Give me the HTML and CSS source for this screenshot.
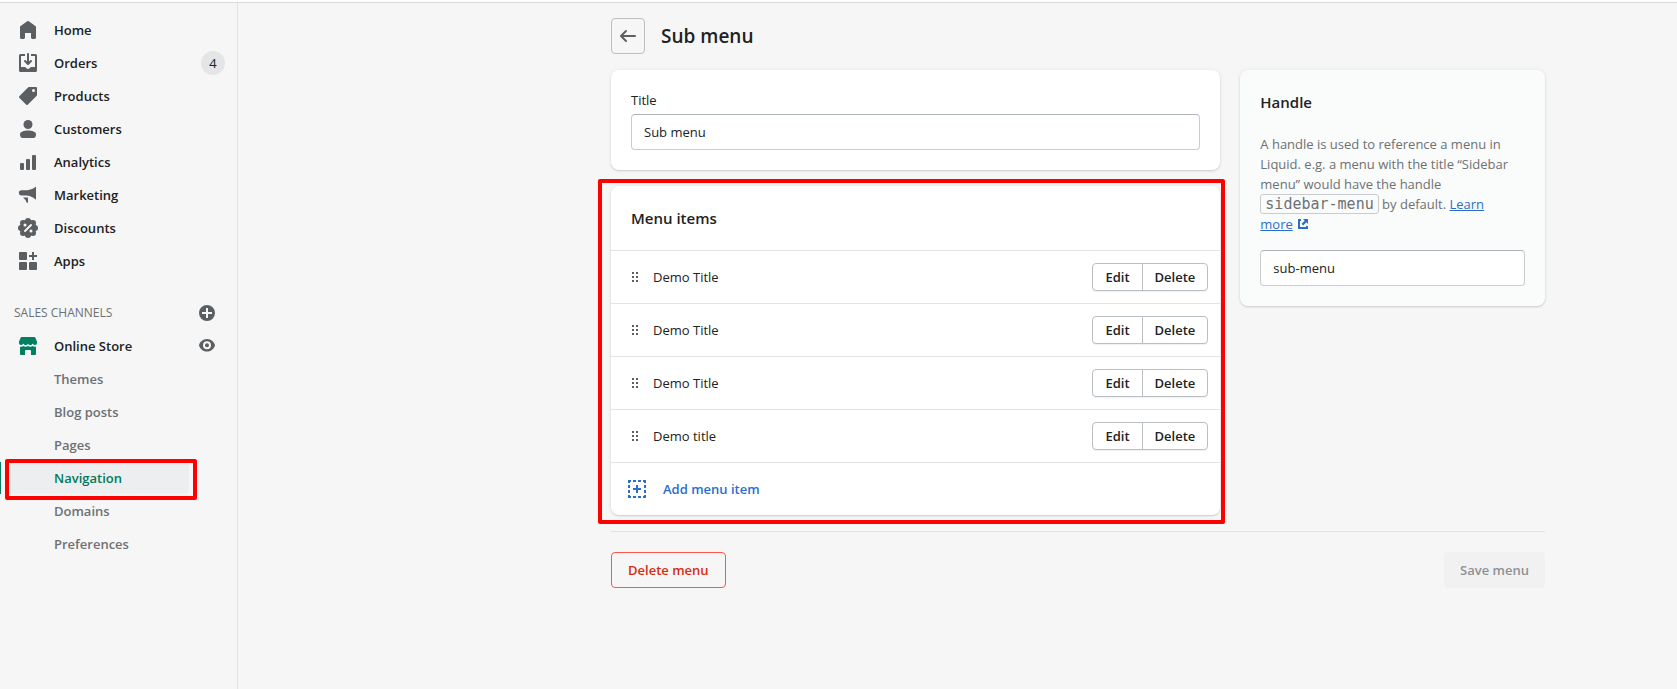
FILE: index.html
```html
<!DOCTYPE html>
<html lang="en">

<head>
    <meta charset="UTF-8">
    <meta name="viewport" content="width=device-width, initial-scale=1.0">
    <title>Sub menu</title>
    <link rel="stylesheet" href="styles.css">
</head>

<body>
    <!-- Shared shapes -->
    <svg class="sprite" aria-hidden="true">
        <symbol id="drag" viewBox="0 0 8 12">
            <path d="M1 1h2v2H1zM5 1h2v2H5zM1 5h2v2H1zM5 5h2v2H5zM1 9h2v2H1zM5 9h2v2H5z" />
        </symbol>
    </svg>

    <div class="topbar"></div>
    <div class="layout">
        <!-- Sidebar -->
        <nav class="sidebar">
            <ul class="nav">
                <li><a href="#">
                    <svg class="icon" viewBox="0 0 20 20"><path d="M18 7.261V17.500c0 .841-.672 1.500-1.500 1.500h-2c-.828 0-1.500-.659-1.500-1.500V13H7v4.477C7 18.318 6.328 19 5.500 19h-2c-.828 0-1.500-.682-1.500-1.523V7.261a1.500 1.500 0 0 1 .615-1.210l6.590-4.820a1.481 1.481 0 0 1 1.590 0l6.590 4.820A1.500 1.500 0 0 1 18 7.260z" /></svg>
                    <span>Home</span></a></li>
                <li><a href="#">
                    <svg class="icon" viewBox="0 0 20 20"><path d="M11 1a1 1 0 1 0-2 0v7.586L7.707 7.293a1 1 0 0 0-1.414 1.414l3 3a1 1 0 0 0 1.414 0l3-3a1 1 0 0 0-1.414-1.414L11 8.586V1z" /><path d="M3 14V3h4V1H2.500A1.500 1.500 0 0 0 1 2.500v15A1.500 1.500 0 0 0 2.500 19h15a1.500 1.500 0 0 0 1.500-1.500v-15A1.500 1.500 0 0 0 17.500 1H13v2h4v11h-3.500c-.775 0-1.388.662-1.926 1.244l-.110.120A1.994 1.994 0 0 1 10 16a1.994 1.994 0 0 1-1.463-.637l-.111-.120C7.888 14.664 7.275 14 6.500 14H3z" /></svg>
                    <span>Orders</span><span class="count">4</span></a></li>
                <li><a href="#">
                    <svg class="icon" viewBox="0 0 20 20"><path fill-rule="evenodd" d="M10.293 1.293A1 1 0 0 1 11 1h7a1 1 0 0 1 1 1v7a1 1 0 0 1-.293.707l-9 9a1 1 0 0 1-1.414 0l-7-7a1 1 0 0 1 0-1.414l9-9zM15.500 6a1.500 1.500 0 1 0 0-3 1.500 1.500 0 0 0 0 3z" /></svg>
                    <span>Products</span></a></li>
                <li><a href="#">
                    <svg class="icon" viewBox="0 0 20 20"><circle cx="10" cy="5.500" r="4.500" /><path d="M2 15.500C2 12.500 6 11.500 10 11.500s8 1 8 4C18 17.500 17 19 15.500 19h-11C3 19 2 17.500 2 15.500z" /></svg>
                    <span>Customers</span></a></li>
                <li><a href="#">
                    <svg class="icon" viewBox="0 0 20 20"><rect x="2" y="11" width="4" height="7" rx="1" /><rect x="8" y="7" width="4" height="11" rx="1" /><rect x="14" y="3" width="4" height="15" rx="1" /></svg>
                    <span>Analytics</span></a></li>
                <li><a href="#">
                    <svg class="icon" viewBox="0 0 20 20"><path d="M18 1.500v13.300c-2.500-2.200-5.500-3.800-9-4.300H3.500A2.500 2.500 0 0 1 3.500 5.200H9c3.500-.300 6.500-1.700 9-3.700zM5 12.500h5v5.300H8.800L7.500 15z" /></svg>
                    <span>Marketing</span></a></li>
                <li><a href="#">
                    <svg class="icon" viewBox="0 0 20 20"><g><circle cx="10" cy="10" r="8.200" /><circle cx="10" cy="3" r="3" /><circle cx="15" cy="5" r="3" /><circle cx="17" cy="10" r="3" /><circle cx="15" cy="15" r="3" /><circle cx="10" cy="17" r="3" /><circle cx="5" cy="15" r="3" /><circle cx="3" cy="10" r="3" /><circle cx="5" cy="5" r="3" /></g><path class="cut-line" d="M7 13l6-6" /><circle class="cut" cx="7" cy="7" r="1.500" /><circle class="cut" cx="13" cy="13" r="1.500" /></svg>
                    <span>Discounts</span></a></li>
                <li><a href="#">
                    <svg class="icon" viewBox="0 0 20 20"><rect x="1" y="1" width="8" height="8" rx="1" /><rect x="1" y="11" width="8" height="8" rx="1" /><rect x="11" y="11" width="8" height="8" rx="1" /><path d="M14 1h2v3h3v2h-3v3h-2V6h-3V4h3z" /></svg>
                    <span>Apps</span></a></li>
            </ul>

            <div class="section">
                <span>SALES CHANNELS</span>
                <button type="button" class="icon-btn" aria-label="Add sales channel">
                    <svg class="icon" viewBox="0 0 20 20"><path fill-rule="evenodd" d="M10 2a8 8 0 1 0 0 16 8 8 0 0 0 0-16zM9 5h2v4h4v2h-4v4H9v-4H5V9h4z" /></svg>
                </button>
            </div>

            <ul class="nav">
                <li class="channel"><a href="#">
                    <svg class="icon store" viewBox="0 0 20 20"><path d="M3 1h14l2 4.500V7c0 1.300-.900 2-2 2s-2-.600-2.300-1.500C14.200 8.500 13.300 9 12.300 9s-1.900-.500-2.300-1.500C9.600 8.500 8.700 9 7.700 9s-1.900-.500-2.400-1.500C5 8.400 4.100 9 3 9S1 8.300 1 7V5.500z" /><path d="M2 10.700c1.300.300 2.500 0 3.400-.700 1.300 1 3.300 1 4.600 0 1.300 1 3.300 1 4.600 0 .900.700 2.100 1 3.400.700V18a1 1 0 0 1-1 1h-4v-4a1 1 0 0 0-1-1H8a1 1 0 0 0-1 1v4H3a1 1 0 0 1-1-1z" /></svg>
                    <span>Online Store</span></a>
                    <button type="button" class="icon-btn" aria-label="View your online store">
                        <svg class="icon" viewBox="0 0 20 20"><path fill-rule="evenodd" d="M10 3c-4.500 0-7 3.200-7.900 5.700v1c.9 2.600 3.400 5.800 7.900 5.800s7-3.200 7.900-5.800v-1C17 6.200 14.500 3 10 3zM10 5.200a4 4 0 1 1 0 8 4 4 0 0 1 0-8z" /><circle cx="10" cy="9.200" r="2" /></svg>
                    </button></li>
            </ul>
            <ul class="nav subnav">
                <li><a href="#">Themes</a></li>
                <li><a href="#">Blog posts</a></li>
                <li><a href="#">Pages</a></li>
                <li class="active"><a href="#" aria-current="page">Navigation</a><span class="mark"></span></li>
                <li><a href="#">Domains</a></li>
                <li><a href="#">Preferences</a></li>
            </ul>
        </nav>

        <!-- Page -->
        <main class="page">
            <header class="page-header">
                <button type="button" class="back" aria-label="Back">
                    <svg class="icon" viewBox="0 0 20 20"><path d="M17 9H5.414l3.293-3.293a1 1 0 0 0-1.414-1.414l-5 5a1 1 0 0 0 0 1.414l5 5a1 1 0 0 0 1.414-1.414L5.414 11H17a1 1 0 1 0 0-2z" /></svg>
                </button>
                <h1>Sub menu</h1>
            </header>

            <div class="columns">
                <div class="primary">
                    <section class="card padded">
                        <label for="title">Title</label>
                        <input id="title" type="text" value="Sub menu">
                    </section>

                    <section class="card">
                        <h2 class="card-header">Menu items</h2>
                        <ul class="items">
                            <li>
                                <svg class="drag"><use href="#drag" /></svg>
                                <span class="name">Demo Title</span>
                                <span class="group"><button type="button">Edit</button><button type="button">Delete</button></span>
                            </li>
                            <li>
                                <svg class="drag"><use href="#drag" /></svg>
                                <span class="name">Demo Title</span>
                                <span class="group"><button type="button">Edit</button><button type="button">Delete</button></span>
                            </li>
                            <li>
                                <svg class="drag"><use href="#drag" /></svg>
                                <span class="name">Demo Title</span>
                                <span class="group"><button type="button">Edit</button><button type="button">Delete</button></span>
                            </li>
                            <li>
                                <svg class="drag"><use href="#drag" /></svg>
                                <span class="name">Demo title</span>
                                <span class="group"><button type="button">Edit</button><button type="button">Delete</button></span>
                            </li>
                        </ul>
                        <button type="button" class="add">
                            <svg class="icon" viewBox="0 0 20 20"><path d="M1 1h3v2H3v1H1zM6 1h3v2H6zM11 1h3v2h-3zM16 1h3v3h-2V3h-1zM17 6h2v3h-2zM17 11h2v3h-2zM17 16h2v3h-3v-2h1zM11 17h3v2h-3zM6 17h3v2H6zM1 16h2v1h1v2H1zM1 11h2v3H1zM1 6h2v3H1zM9 6h2v3h3v2h-3v3H9v-3H6V9h3z" /></svg>
                            <span>Add menu item</span>
                        </button>
                        <span class="mark"></span>
                    </section>
                </div>

                <aside class="card padded handle">
                    <h2><label for="handle">Handle</label></h2>
                    <p>A handle is used to reference a menu in Liquid. e.g. a menu with the title “Sidebar menu” would have the handle <code>sidebar-menu</code> by default. <a href="#">Learn <span class="keep">more<svg class="external" viewBox="0 0 12 12"><path d="M4 1v2H3v6h6V8h2v3H1V1zM6 1h5v5L9.300 4.300 6.200 7.400 4.600 5.800 7.700 2.700z" /></svg></span></a></p>
                    <input id="handle" type="text" value="sub-menu">
                </aside>
            </div>

            <footer class="actions">
                <button type="button" class="btn-delete">Delete menu</button>
                <button type="button" class="btn-save" disabled>Save menu</button>
            </footer>
        </main>
    </div>
</body>

</html>
```
FILE: styles.css
```css
* {
    box-sizing: border-box;
}

body {
    margin: 0;
    min-height: 100vh;
    display: flex;
    flex-direction: column;
    background-color: #f6f6f6;
    color: #202223;
    font-family: "Open Sans", "Noto Sans", sans-serif;
    font-size: 13px;
    line-height: 20px;
}

h1,
h2,
p,
ul {
    margin: 0;
    padding: 0;
}

ul {
    list-style: none;
}

a {
    color: #2c6ecb;
}

button,
input {
    font: inherit;
    color: inherit;
}

button {
    font-weight: 600;
    padding: 0;
    cursor: pointer;
}

.sprite {
    display: none;
}

.icon {
    display: block;
    flex: none;
    width: 20px;
    height: 20px;
    fill: #5c5f62;
}

.cut {
    fill: #f6f6f6;
}

.cut-line {
    stroke: #f6f6f6;
    stroke-width: 2;
    stroke-linecap: round;
}

.topbar {
    height: 3px;
    background-color: white;
    border-bottom: 1px solid #d8d8d8;
}

.layout {
    display: flex;
    flex: 1;
}

/* Sidebar */
.sidebar {
    flex: none;
    width: 238px;
    padding-top: 11px;
    border-right: 1px solid #e1e3e5;
}

.nav {
    display: grid;
    gap: 1px;
}

.nav li {
    display: flex;
    position: relative;
}

.nav a {
    flex: 1;
    display: flex;
    align-items: center;
    gap: 16px;
    height: 32px;
    margin-left: 8px;
    padding: 0 4px 0 10px;
    color: #202223;
    font-weight: 600;
    text-decoration: none;
}

.count {
    width: 24px;
    margin: 0 8px 0 auto;
    border-radius: 12px;
    background-color: #e4e5e7;
    font-weight: 400;
    line-height: 24px;
    text-align: center;
}

.section {
    display: flex;
    align-items: center;
    justify-content: space-between;
    height: 32px;
    margin: 20px 0 1px;
    padding-left: 14px;
    color: #6d7175;
    font-size: 12px;
}

.icon-btn {
    margin-right: 20px;
    border: 0;
    background: none;
}

.store {
    fill: #008060;
}

.subnav {
    margin-top: 1px;
}

.subnav a {
    padding-left: 46px;
    margin-right: 48px;
    border-radius: 4px;
    color: #6d7175;
}

.subnav .active a {
    background-color: #edeeef;
    color: #007a5c;
}

.active::before {
    content: "";
    position: absolute;
    inset: 0 auto 0 0;
    width: 1px;
    background-color: #008060;
}

/* Red highlight frames */
.mark {
    position: absolute;
    border: 4px solid red;
    border-radius: 2px;
    pointer-events: none;
}

.active .mark {
    inset: -3px 40px -6px 5px;
}

.card .mark {
    inset: -7px -5px -9px -13px;
}

/* Page */
.page {
    flex: 1;
    max-width: 934px;
    margin: 0 132px 0 auto;
    padding-top: 15px;
}

.page-header {
    display: flex;
    align-items: center;
    gap: 16px;
    margin-bottom: 16px;
}

.back {
    display: grid;
    place-items: center;
    width: 34px;
    height: 36px;
    border: 1px solid #babfc3;
    border-radius: 4px;
    background: none;
}

h1 {
    font-size: 19px;
    font-weight: 600;
    line-height: 28px;
}

h2 {
    font-size: 15px;
    font-weight: 600;
    line-height: 24px;
}

.columns {
    display: grid;
    grid-template-columns: 2fr 1fr;
    gap: 20px;
    align-items: start;
}

.primary {
    display: grid;
    gap: 16px;
}

.card {
    position: relative;
    border-radius: 8px;
    background-color: white;
    box-shadow: 0 0 5px rgba(23, 24, 24, 0.05), 0 1px 2px rgba(0, 0, 0, 0.15);
}

.padded {
    display: grid;
    padding: 20px;
}

.padded input {
    width: 100%;
    height: 36px;
    margin-top: 4px;
    padding: 0 12px;
    border: 1px solid #c9cccf;
    border-top-color: #aeb4b9;
    border-radius: 4px;
    background-color: white;
}

.card-header {
    padding: 20px;
}

.items li {
    display: flex;
    align-items: center;
    height: 53px;
    padding: 0 12px 0 20px;
    border-top: 1px solid #e1e3e5;
}

.drag {
    width: 8px;
    height: 12px;
    fill: #5c5f62;
}

.name {
    flex: 1;
    margin-left: 14px;
}

.group {
    display: flex;
}

.group button {
    height: 28px;
    padding: 0 12px;
    border: 1px solid #babfc3;
    border-radius: 4px 0 0 4px;
    background-color: white;
    box-shadow: 0 1px 0 rgba(0, 0, 0, 0.05);
}

.group button + button {
    margin-left: -1px;
    border-radius: 0 4px 4px 0;
}

.add {
    display: flex;
    align-items: center;
    gap: 16px;
    width: 100%;
    height: 53px;
    padding: 0 16px;
    border: 0;
    border-top: 1px solid #e1e3e5;
    background: none;
    color: #2c6ecb;
}

.add .icon {
    fill: #2c6ecb;
}

.handle {
    background-color: #fafbfb;
}

.handle p {
    margin: 20px 0 12px;
    color: #6d7175;
}

code {
    padding: 0 4px;
    border: 1px solid #c9cccf;
    border-radius: 3px;
    font-family: "DejaVu Sans Mono", monospace;
    font-size: 15px;
    line-height: 16px;
    white-space: nowrap;
}

.keep {
    white-space: nowrap;
}

.external {
    width: 12px;
    height: 12px;
    margin-left: 4px;
    vertical-align: -1px;
    fill: #2c6ecb;
}

.actions {
    display: flex;
    justify-content: space-between;
    margin-top: 16px;
    padding-top: 20px;
    border-top: 1px solid #e1e3e5;
}

.actions button {
    height: 36px;
    padding: 0 16px;
    border: 1px solid #fd5749;
    border-radius: 4px;
    background: none;
    color: #d72c0d;
}

.actions .btn-save {
    padding: 0 15px;
    border-color: #f1f1f1;
    background-color: #f1f1f1;
    color: #8c9196;
}
```
